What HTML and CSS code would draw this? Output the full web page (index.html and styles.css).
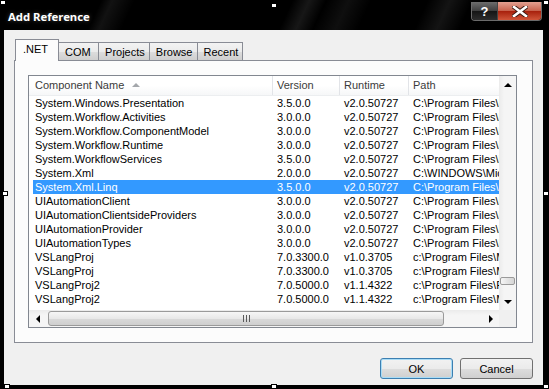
FILE: index.html
```html
<!DOCTYPE html>
<html lang="en">

<head>
    <link rel="stylesheet" href="styles.css">
</head>

<body>
    <div class="window">
        <div class="titlebar">
            <span class="title">Add Reference</span>
            <div class="caption">
                <span class="cap cap-help">?</span>
                <span class="cap cap-close">
                    <svg width="16" height="11" viewBox="0 0 16 11">
                        <path d="M2 1 L14 10 M14 1 L2 10" stroke="#3a1a14" stroke-width="4.5" stroke-linecap="square"/>
                        <path d="M2 1 L14 10 M14 1 L2 10" stroke="#fff" stroke-width="2.6" stroke-linecap="square"/>
                    </svg>
                </span>
            </div>
        </div>

        <div class="client">
            <div class="tabs">
                <span class="tab active">.NET</span>
                <span class="tab">COM</span>
                <span class="tab">Projects</span>
                <span class="tab">Browse</span>
                <span class="tab">Recent</span>
            </div>

            <div class="panel">
                <div class="list">
                    <div class="list-body">
                        <div class="grid">
                            <div class="head">
                                <span class="col c-name">Component Name<i class="sort"></i></span>
                                <span class="col c-ver">Version</span>
                                <span class="col c-run">Runtime</span>
                                <span class="col c-path">Path</span>
                            </div>
                            <div class="row"><span class="col c-name">System.Windows.Presentation</span><span class="col c-ver">3.5.0.0</span><span class="col c-run">v2.0.50727</span><span class="col c-path">C:\Program Files\Reference Assemblies</span></div>
                            <div class="row"><span class="col c-name">System.Workflow.Activities</span><span class="col c-ver">3.0.0.0</span><span class="col c-run">v2.0.50727</span><span class="col c-path">C:\Program Files\Reference Assemblies</span></div>
                            <div class="row"><span class="col c-name">System.Workflow.ComponentModel</span><span class="col c-ver">3.0.0.0</span><span class="col c-run">v2.0.50727</span><span class="col c-path">C:\Program Files\Reference Assemblies</span></div>
                            <div class="row"><span class="col c-name">System.Workflow.Runtime</span><span class="col c-ver">3.0.0.0</span><span class="col c-run">v2.0.50727</span><span class="col c-path">C:\Program Files\Reference Assemblies</span></div>
                            <div class="row"><span class="col c-name">System.WorkflowServices</span><span class="col c-ver">3.5.0.0</span><span class="col c-run">v2.0.50727</span><span class="col c-path">C:\Program Files\Reference Assemblies</span></div>
                            <div class="row"><span class="col c-name">System.Xml</span><span class="col c-ver">2.0.0.0</span><span class="col c-run">v2.0.50727</span><span class="col c-path">C:\WINDOWS\Microsoft.NET</span></div>
                            <div class="row selected"><span class="col c-name">System.Xml.Linq</span><span class="col c-ver">3.5.0.0</span><span class="col c-run">v2.0.50727</span><span class="col c-path">C:\Program Files\Reference Assemblies</span></div>
                            <div class="row"><span class="col c-name">UIAutomationClient</span><span class="col c-ver">3.0.0.0</span><span class="col c-run">v2.0.50727</span><span class="col c-path">C:\Program Files\Reference Assemblies</span></div>
                            <div class="row"><span class="col c-name">UIAutomationClientsideProviders</span><span class="col c-ver">3.0.0.0</span><span class="col c-run">v2.0.50727</span><span class="col c-path">C:\Program Files\Reference Assemblies</span></div>
                            <div class="row"><span class="col c-name">UIAutomationProvider</span><span class="col c-ver">3.0.0.0</span><span class="col c-run">v2.0.50727</span><span class="col c-path">C:\Program Files\Reference Assemblies</span></div>
                            <div class="row"><span class="col c-name">UIAutomationTypes</span><span class="col c-ver">3.0.0.0</span><span class="col c-run">v2.0.50727</span><span class="col c-path">C:\Program Files\Reference Assemblies</span></div>
                            <div class="row"><span class="col c-name">VSLangProj</span><span class="col c-ver">7.0.3300.0</span><span class="col c-run">v1.0.3705</span><span class="col c-path">c:\Program Files\Microsoft Visual Studio</span></div>
                            <div class="row"><span class="col c-name">VSLangProj</span><span class="col c-ver">7.0.3300.0</span><span class="col c-run">v1.0.3705</span><span class="col c-path">c:\Program Files\Microsoft Visual Studio</span></div>
                            <div class="row"><span class="col c-name">VSLangProj2</span><span class="col c-ver">7.0.5000.0</span><span class="col c-run">v1.1.4322</span><span class="col c-path">c:\Program Files\Fichiers communs</span></div>
                            <div class="row"><span class="col c-name">VSLangProj2</span><span class="col c-ver">7.0.5000.0</span><span class="col c-run">v1.1.4322</span><span class="col c-path">c:\Program Files\Microsoft Visual Studio</span></div>
                        </div>
                        <div class="vscroll">
                            <div class="sbtn"><i class="arr up"></i></div>
                            <div class="strack"><div class="vthumb"></div></div>
                            <div class="sbtn"><i class="arr down"></i></div>
                        </div>
                    </div>
                    <div class="hbar">
                        <div class="sbtn"><i class="arr left"></i></div>
                        <div class="htrack"><div class="hthumb"><span class="grip"></span></div></div>
                        <div class="sbtn"><i class="arr right"></i></div>
                        <div class="corner"></div>
                    </div>
                </div>
            </div>

            <div class="actions">
                <button class="btn default">OK</button>
                <button class="btn">Cancel</button>
            </div>
        </div>

        <!-- selection handles from the screenshot tool -->
        <span class="handle h-tl"></span>
        <span class="handle h-tm"></span>
        <span class="handle h-tr"></span>
        <span class="handle h-ml"></span>
        <span class="handle h-mr"></span>
        <span class="handle h-bl"></span>
        <span class="handle h-bm"></span>
        <span class="handle h-br"></span>
    </div>
</body>

</html>
```

FILE: styles.css
```css
body{
    margin: 0;
    background: #000;
    font-family: "Liberation Sans", Arial, sans-serif;
    font-size: 11px;
}

.window{
    position: relative;
    width: 549px;
    height: 389px;
    background: #000;
    display: flex;
    flex-direction: column;
    overflow: hidden;
}

/* title bar */
.titlebar{
    height: 30px;
    flex: none;
    display: flex;
    justify-content: space-between;
    padding-left: 8px;
    background:
        linear-gradient(115deg, transparent 18%, rgba(255,255,255,0.07) 20%, transparent 24%,
            transparent 52%, rgba(255,255,255,0.09) 55%, transparent 58%,
            rgba(255,255,255,0.06) 62%, transparent 66%,
            transparent 76%, rgba(255,255,255,0.08) 80%, transparent 84%),
        #000;
}

.title{
    color: #fff;
    font-family: "Noto Sans", "Liberation Sans", sans-serif;
    font-weight: bold;
    font-size: 11.3px;
    line-height: 16px;
    padding-top: 9px;
    text-shadow: 0 0 4px rgba(255,255,255,0.25);
}

.caption{
    display: flex;
    margin: 2px 7px 0 0;
    height: 18px;
    border: 1px solid #6b6b6b;
    border-top: none;
    border-radius: 0 0 4px 4px;
    overflow: hidden;
}

.cap{
    display: flex;
    align-items: center;
    justify-content: center;
    height: 18px;
}

.cap-help{
    width: 25px;
    color: #fff;
    font-weight: bold;
    font-size: 13px;
    border-right: 1px solid #444;
    background: linear-gradient(#6d6d6d, #3e3e3e 50%, #151515 51%, #2d2d2d);
}

.cap-close{
    width: 43px;
    background: linear-gradient(#e2a091, #c6614c 50%, #a7200c 51%, #d0563a);
}

/* client area */
.client{
    flex: 1;
    margin: 0 6px 4px 4px;
    padding: 9px 10px 0 10px;
    background: #f0f0f0;
    display: flex;
    flex-direction: column;
}

.tabs{
    display: flex;
    align-items: flex-end;
    height: 21px;
    padding-left: 1px;
    position: relative;
    z-index: 1;
}

.tab{
    height: 18px;
    min-width: 41px;
    line-height: 18px;
    padding: 0 4px 0 6px;
    margin-right: -1px;
    box-sizing: border-box;
    border: 1px solid #898c95;
    border-bottom: none;
    background: linear-gradient(#f3f3f3, #ebebeb 50%, #dddddd 51%, #cfcfcf);
    color: #000;
}

.tab.active{
    height: 22px;
    line-height: 19px;
    padding: 0 10px 0 7px;
    margin-bottom: -1px;
    background: #fcfcfc;
    position: relative;
    z-index: 2;
}

.panel{
    height: 283px;
    box-sizing: border-box;
    border: 1px solid #898c95;
    background: #fcfcfc;
    padding: 14px 15px 14px 13px;
}

/* list view */
.list{
    height: 253px;
    box-sizing: border-box;
    border: 1px solid #828790;
    background: #fff;
    display: flex;
    flex-direction: column;
    overflow: hidden;
}

.list-body{
    flex: 1;
    min-height: 0;
    display: flex;
    overflow: hidden;
}

.grid{
    flex: 1;
    overflow: hidden;
}

.head{
    display: flex;
    height: 20px;
    line-height: 19px;
    color: #3b3b3b;
    background: linear-gradient(#fff, #fff 50%, #f6f7f8);
    box-sizing: border-box;
    border-bottom: 1px solid #eceef0;
}

.col{
    flex: none;
    white-space: nowrap;
    overflow: hidden;
    box-sizing: border-box;
    padding-left: 5px;
}

.c-name{ width: 243px; padding-left: 6px; }
.c-ver{ width: 67px; }
.c-run{ width: 69px; }
.c-path{ flex: 1; }

.head .c-ver,
.head .c-run,
.head .c-path{
    border-left: 1px solid #e2e4e8;
    padding-left: 4px;
}

.sort{
    display: inline-block;
    margin-left: 8px;
    vertical-align: 2px;
    border-left: 4px solid transparent;
    border-right: 4px solid transparent;
    border-bottom: 4px solid #a4a7ab;
}

.row{
    display: flex;
    height: 14px;
    line-height: 14px;
    margin-left: 4px;
    color: #000;
}

.row .c-name{
    width: 239px;
    padding-left: 2px;
}

.row.selected{
    background: #3399ff;
    color: #fff;
}

/* scrollbars */
.vscroll{
    width: 17px;
    flex: none;
    display: flex;
    flex-direction: column;
    background: linear-gradient(90deg, #ebebeb, #f5f5f5 30%, #f5f5f5);
}

.sbtn{
    width: 17px;
    height: 17px;
    flex: none;
    display: flex;
    align-items: center;
    justify-content: center;
}

.strack{
    flex: 1;
}

.vthumb{
    margin: 184px 0 0 1px;
    width: 13px;
    height: 6px;
    border: 1px solid #9a9a9a;
    border-radius: 2px;
    background: linear-gradient(90deg, #f6f6f6, #e4e4e4 50%, #d6d6d6);
}

.arr{
    width: 0;
    height: 0;
    display: block;
}

.arr.up{
    border-left: 4px solid transparent;
    border-right: 4px solid transparent;
    border-bottom: 4px solid #000;
}

.arr.down{
    border-left: 4px solid transparent;
    border-right: 4px solid transparent;
    border-top: 4px solid #000;
}

.arr.left{
    border-top: 4px solid transparent;
    border-bottom: 4px solid transparent;
    border-right: 4px solid #000;
}

.arr.right{
    border-top: 4px solid transparent;
    border-bottom: 4px solid transparent;
    border-left: 4px solid #000;
}

.hbar{
    height: 17px;
    flex: none;
    display: flex;
    background: linear-gradient(#ebebeb, #f5f5f5 30%, #f5f5f5);
}

.htrack{
    flex: 1;
}

.hthumb{
    margin: 1px 0 0 2px;
    width: 396px;
    height: 15px;
    box-sizing: border-box;
    border: 1px solid #9a9a9a;
    border-radius: 3px;
    background: linear-gradient(#f6f6f6, #e8e8e8 50%, #d9d9d9 51%, #cfcfcf);
    display: flex;
    align-items: center;
    justify-content: center;
}

.grip{
    width: 7px;
    height: 7px;
    background: repeating-linear-gradient(90deg, #5a5a5a 0 1px, transparent 1px 3px);
}

.corner{
    width: 17px;
    background: #f0f0f0;
}

/* buttons */
.actions{
    display: flex;
    justify-content: flex-end;
    gap: 7px;
    margin-top: 15px;
}

.btn{
    width: 73px;
    height: 21px;
    padding: 0;
    font-family: "Liberation Sans", Arial, sans-serif;
    font-size: 11px;
    color: #000;
    border: 1px solid #707070;
    border-radius: 3px;
    background: linear-gradient(#f2f2f2, #ebebeb 50%, #dddddd 51%, #cfcfcf);
}

.btn.default{
    border-color: #3c7fb1;
    box-shadow: inset 0 0 0 1px #a9dcf6;
}

/* screenshot handles */
.handle{
    position: absolute;
    width: 4px;
    height: 3px;
    background: #fff;
    border: 1px solid #000;
}

.h-tl{ left: 0; top: 0; }
.h-tm{ left: 271px; top: 3px; }
.h-tr{ left: 543px; top: 0; }
.h-ml{ left: 2px; top: 191px; }
.h-mr{ left: 543px; top: 191px; }
.h-bl{ left: 4px; top: 384px; }
.h-bm{ left: 271px; top: 384px; }
.h-br{ left: 543px; top: 384px; }
```
